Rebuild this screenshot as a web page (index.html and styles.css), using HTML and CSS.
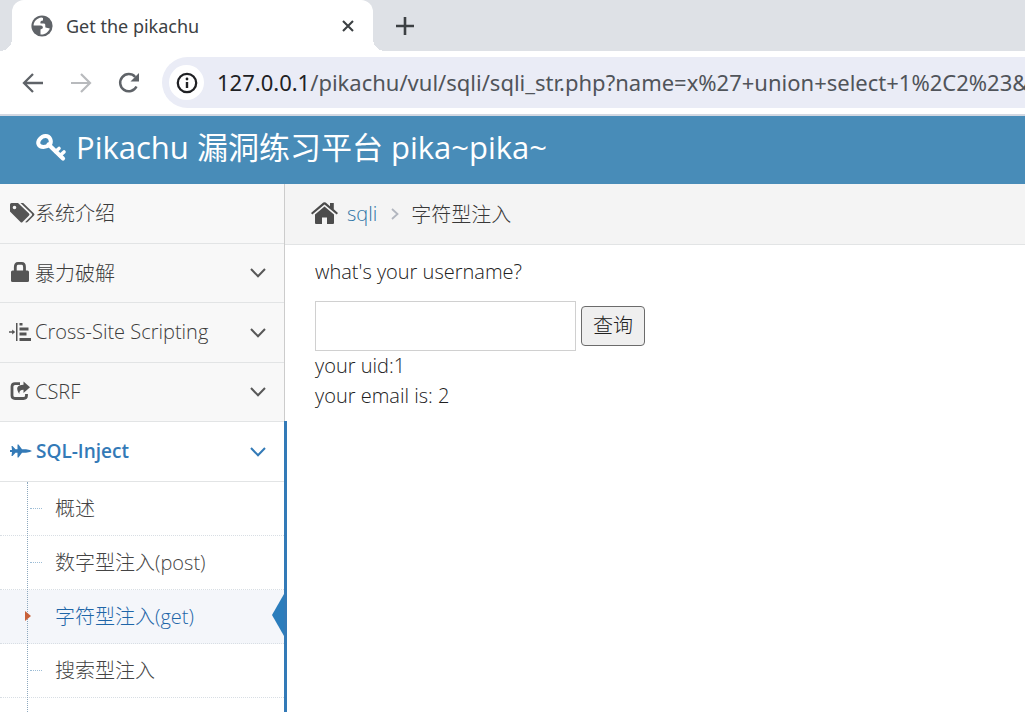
FILE: index.html
```html
<!DOCTYPE html>
<html lang="zh-CN">
<head>
<meta charset="utf-8">
<title>Get the pikachu</title>
<link rel="stylesheet" href="styles.css">
</head>
<body>
<div class="browser">
  <div class="tab-strip">
    <div class="tab">
      <svg class="tab-icon" viewBox="0 0 22 22"><circle cx="11" cy="11" r="10.6" fill="#5f6368"/><path d="M10.5 2.5C6 3 2.600 6.500 2.600 10.500H9.500C11.500 10.500 12.500 12 11.500 13.500L9.500 14.500V19.500C14 20 17.500 17 18.800 13.500L14.500 12.500C14 10.500 15 9 13 8.500H9.500C9 6.500 10 5.500 12 5.500V3Z" fill="#fff"/></svg>
      <span class="tab-title">Get the pikachu</span>
      <button class="icon-button tab-close" aria-label="Close tab"><svg viewBox="0 0 12 12" width="12" height="12"><path d="M1 1 11 11M11 1 1 11" stroke="#3c4043" stroke-width="2.100"/></svg></button>
    </div>
    <button class="icon-button tab-new" aria-label="New tab"><svg viewBox="0 0 18 18" width="18" height="18"><path d="M9 0V18M0 9H18" stroke="#3c4043" stroke-width="2.600"/></svg></button>
  </div>
  <div class="toolbar">
    <button class="icon-button" aria-label="Back"><svg viewBox="0 0 22 22" width="22" height="22"><path d="M21 11H2.500M11 2 2 11l9 9" fill="none" stroke="#5f6368" stroke-width="2.300"/></svg></button>
    <button class="icon-button" aria-label="Forward"><svg viewBox="0 0 22 22" width="22" height="22"><path d="M1 11H19.500M11 2l9 9-9 9" fill="none" stroke="#b8babd" stroke-width="2.200"/></svg></button>
    <button class="icon-button" aria-label="Reload"><svg viewBox="0 0 22 22" width="22" height="22"><path d="M18.500 14.500A8.600 8.600 0 1 1 17.200 5" fill="none" stroke="#5f6368" stroke-width="2.500"/><path d="M21 1V9.500H12.500Z" fill="#5f6368"/></svg></button>
    <div class="address">
      <span class="site-info"><svg viewBox="0 0 22 22" width="22" height="22"><circle cx="11" cy="11" r="9.200" fill="none" stroke="#202124" stroke-width="2.300"/><path d="M11 10v6" stroke="#202124" stroke-width="2.400"/><circle cx="11" cy="7" r="1.400" fill="#202124"/></svg></span>
      <span class="url"><span class="url-host">127.0.0.1</span>/pikachu/vul/sqli/sqli_str.php?name=x%27+union+select+1%2C2%23&amp;</span>
    </div>
  </div>
</div>

<header class="navbar">
  <a class="brand" href="#">
    <svg class="brand-icon" viewBox="0 0 30 28"><path fill="none" stroke="#fff" stroke-width="4" d="M14 11.500C16 8 14 2.800 9.500 3C5 3.200 1.200 8 2.500 11.200C4 15 10.500 14.500 14 11.500Z"/><path d="M12.500 11.500 27 25.500" stroke="#fff" stroke-width="4.200" stroke-linecap="round"/><path d="M19.500 18.500 23 15.500M24 22.500 28 19" stroke="#fff" stroke-width="3.600" stroke-linecap="round"/></svg>
    <span>Pikachu 漏洞练习平台 pika~pika~</span>
  </a>
</header>

<div class="main">
  <nav class="sidebar">
    <ul class="nav-list">
      <li class="nav-item"><a class="nav-link tight" href="#">
        <svg class="nav-icon tags" viewBox="0 0 25 20"><path fill="#555" fill-rule="evenodd" d="M1.500 0H8L19 10.500Q20 11.500 19 12.500L12.500 19Q11.500 20 10.500 19L0 8.500V1.500Q0 0 1.500 0ZM4.500 2.700A1.800 1.800 0 1 0 4.500 6.300A1.800 1.800 0 1 0 4.500 2.700Z"/><path fill="#555" d="M10.500 0H13.200L24 10.500Q25 11.500 24 12.500L17.500 19Q16.300 20 15.300 18.900L21.800 12.400Q22.500 11.500 21.800 10.700Z"/></svg>
        <span>系统介绍</span></a></li>
      <li class="nav-item"><a class="nav-link" href="#">
        <svg class="nav-icon" viewBox="0 0 21 20"><path d="M5.300 9V5Q5.300 1.400 8 1.400H11.800Q14.500 1.400 14.500 5V9" fill="none" stroke="#555" stroke-width="2.800"/><rect x="1" y="8.500" width="18" height="11.500" rx="1.500" fill="#555"/></svg>
        <span>暴力破解</span><svg class="chevron" viewBox="0 0 16 10"><path d="M1 1l7 7.300L15 1"/></svg></a></li>
      <li class="nav-item"><a class="nav-link" href="#">
        <svg class="nav-icon" viewBox="0 0 21 20"><path fill="#555" d="M6 1h1.500v18H6zM-1 9.300h3.200V7.500L5.200 10 2.200 12.500V10.700H-1zM9.500 1h3v2.600h-3zM9.500 5.500h9v3h-9zM9.500 10.600h7v2.800h-7zM9.500 16h11.500v3H9.500z"/></svg>
        <span>Cross-Site Scripting</span><svg class="chevron" viewBox="0 0 16 10"><path d="M1 1l7 7.300L15 1"/></svg></a></li>
      <li class="nav-item"><a class="nav-link" href="#">
        <svg class="nav-icon" viewBox="0 0 21 20"><path fill="none" stroke="#555" stroke-width="2.800" d="M10 2.600H5Q2 2.600 2 5.600V14.500Q2 17.500 5 17.500H13.500Q16.500 17.500 16.500 14.500V13"/><path fill="#555" d="M13.500 0.500 20 6.300 13.500 12V8.700Q9 8.700 9.300 13Q3.500 4.200 13.500 3.800Z"/></svg>
        <span>CSRF</span><svg class="chevron" viewBox="0 0 16 10"><path d="M1 1l7 7.300L15 1"/></svg></a></li>
      <li class="nav-item open"><a class="nav-link" href="#">
        <svg class="nav-icon" viewBox="0 0 21 20"><path fill="#337ab7" d="M1.500 5H2.500L5.500 8.300H7.500V3.500H8.500L12 8.300H16Q20.500 9 22 10Q20.500 11 16 11.700H12L8.500 16.500H7.500V11.700H5.500L2.500 15H1.500L2 11H0V9H2Z"/></svg>
        <span>SQL-Inject</span><svg class="chevron" viewBox="0 0 16 10"><path d="M1 1l7 7.300L15 1"/></svg></a>
        <ul class="submenu">
          <li class="sub-item"><a href="#">概述</a></li>
          <li class="sub-item"><a href="#">数字型注入(post)</a></li>
          <li class="sub-item current"><a href="#" aria-current="page">字符型注入(get)</a></li>
          <li class="sub-item"><a href="#">搜索型注入</a></li>
        </ul>
      </li>
    </ul>
  </nav>

  <main class="content">
    <div class="breadcrumb">
      <svg class="home" viewBox="0 0 27 22"><path fill="#4c4c4c" d="M13.500 4.500 23 12.500V21Q23 22 22 22H16V15.500H11V22H5Q4 22 4 21V12.500Z"/><path fill="#4c4c4c" d="M12.300 0.600Q13.500-.3 14.700.6L19 4.200V1H22.800V7.300L27 10.900 25.700 12.500 13.500 2.500 1.300 12.500 0 10.900Z"/></svg>
      <a href="#">sqli</a>
      <svg class="separator" viewBox="0 0 8 12"><path d="M1 1l5.500 5L1 11" fill="none" stroke="#b2b6bf" stroke-width="1.800"/></svg>
      <span>字符型注入</span>
    </div>
    <form class="query">
      <label class="prompt" for="username">what's your username?</label>
      <div class="query-row">
        <input class="name-input" id="username" type="text" name="name">
        <button class="submit" type="button">查询</button>
      </div>
      <p class="result">your uid:1<br>your email is: 2</p>
    </form>
  </main>
</div>
</body>
</html>
```
FILE: styles.css
```css
* { box-sizing: border-box; }
body {
  margin: 0;
  height: 100vh;
  display: flex;
  flex-direction: column;
  overflow: hidden;
  background: #fff;
  color: #202020;
  font-family: "Open Sans", "Noto Sans CJK SC", sans-serif;
  font-size: 20px;
  font-weight: 300;
}
ul { list-style: none; margin: 0; padding: 0; }
a { text-decoration: none; color: inherit; }
svg { display: block; flex: none; overflow: visible; }
.icon-button {
  display: flex;
  align-items: center;
  justify-content: center;
  flex: none;
  padding: 0;
  border: 0;
  background: none;
}

.browser { flex: none; border-bottom: 2px solid #d3d8e2; font-weight: 400; }
.tab-strip { display: flex; height: 51px; padding-left: 12px; background: #dee1e6; }
.tab {
  position: relative;
  display: flex;
  align-items: center;
  width: 361px;
  padding: 0 19px;
  border-radius: 12px 12px 0 0;
  background: #fff;
}
.tab::before, .tab::after {
  content: "";
  position: absolute;
  bottom: 0;
  width: 12px;
  height: 12px;
}
.tab::before { right: 100%; background: radial-gradient(circle at 0 0, #dee1e6 12px, #fff 12px); }
.tab::after { left: 100%; background: radial-gradient(circle at 100% 0, #dee1e6 12px, #fff 12px); }
.tab-icon { width: 22px; height: 22px; margin-right: 13px; }
.tab-title { flex: 1; font-family: "Noto Sans", sans-serif; font-size: 18px; color: #3c4043; }
.tab-new { width: 40px; margin-left: 12px; }
.toolbar { display: flex; align-items: center; gap: 26px; height: 63px; padding-left: 22px; }
.address {
  display: flex;
  align-items: center;
  gap: 13px;
  flex: 1;
  min-width: 0;
  height: 51px;
  padding-left: 7px;
  margin-left: -4px;
  border-radius: 26px 0 0 26px;
  background: #eaecf6;
  overflow: hidden;
}
.site-info {
  display: flex;
  align-items: center;
  justify-content: center;
  flex: none;
  width: 35px;
  height: 35px;
  border-radius: 50%;
  background: #fff;
}
.url { padding-bottom: 2px; font-family: "Noto Sans", sans-serif; font-size: 22px; white-space: nowrap; color: #50545a; }
.url-host { color: #202124; }

.navbar { display: flex; align-items: center; flex: none; height: 68px; padding: 0 36px; background: #488cb8; }
.brand { display: flex; align-items: center; gap: 10px; color: #fff; font-size: 31px; font-weight: 400; line-height: 62px; padding-bottom: 6px; }
.brand-icon { width: 30px; height: 28px; }

.main { display: flex; flex: 1; min-height: 0; }
.sidebar { flex: none; width: 285px; border-right: 1px solid #ccc; background: #f8f8f8; }
.nav-list { display: flex; flex-direction: column; height: 100%; }
.nav-link {
  display: flex;
  align-items: center;
  gap: 4px;
  height: 60px;
  padding: 0 18px 2px 10px;
  border-bottom: 1px solid #e2e4e5;
  color: #3c3c3c;
}
.nav-item:nth-child(even) .nav-link { height: 59px; }
.nav-link.tight { gap: 0; }
.nav-icon { width: 21px; height: 20px; }
.nav-icon.tags { width: 25px; }
.chevron { width: 16px; height: 10px; margin: 2px 0 0 auto; fill: none; stroke: #585858; stroke-width: 2; }
.open { position: relative; display: flex; flex-direction: column; flex: 1; background: #fff; }
.open::after {
  content: "";
  position: absolute;
  top: -1px;
  bottom: 0;
  right: -3px;
  width: 3px;
  background: #337ab7;
}
.open > .nav-link { flex: none; color: #337ab7; font-size: 19px; font-weight: 600; gap: 5px; }
.open .chevron { stroke: #337ab7; }
.submenu { position: relative; flex: 1; }
.submenu::before {
  content: "";
  position: absolute;
  top: 0;
  bottom: 0;
  left: 27px;
  border-left: 1px dotted #8da8be;
  z-index: 1;
}
.sub-item { position: relative; }
.sub-item a {
  display: block;
  height: 54px;
  padding-left: 55px;
  border-bottom: 1px dotted #d8dee4;
  line-height: 53px;
  color: #444;
}
.sub-item::before {
  content: "";
  position: absolute;
  top: 26px;
  left: 30px;
  width: 12px;
  border-top: 1px dotted #9dbdd6;
}
.sub-item.current a { color: #1f66a8; background: #f4f6fa; }
.current::before {
  top: 21px;
  left: 25px;
  width: 6px;
  border: solid transparent;
  border-width: 5px 0 5px 6px;
  border-left-color: #c86139;
  z-index: 2;
}
.current::after {
  content: "";
  position: absolute;
  top: 4px;
  right: 0;
  border: solid transparent;
  border-width: 21px 12px 21px 0;
  border-right-color: #2b7dbc;
}

.content { flex: 1; min-width: 0; }
.breadcrumb {
  display: flex;
  align-items: center;
  height: 61px;
  padding: 0 26px 2px;
  border-bottom: 1px solid #e2e4e5;
  background: #f4f4f4;
  color: #383838;
}
.breadcrumb a { margin-left: 9px; color: #2f74a6; }
.home { width: 27px; height: 22px; }
.separator { width: 8px; height: 12px; margin: 2px 12px 0 14px; }
.query { padding: 12px 30px; line-height: 30px; }
.prompt { display: block; margin-bottom: 14px; }
.query-row { display: flex; align-items: center; gap: 5px; }
.name-input { width: 261px; height: 50px; padding: 8px; border: 1px solid #d0d0d0; background: #fff; font: inherit; }
.submit {
  height: 40px;
  padding: 0 11px;
  border: 1px solid #6b6b6b;
  border-radius: 4px;
  background: #efefef;
  color: #202020;
  font: inherit;
}
.result { margin: 0; }
```
